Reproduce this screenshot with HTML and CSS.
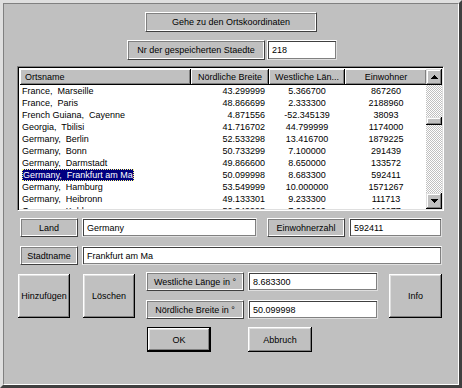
FILE: index.html
```html
<!DOCTYPE html>
<html lang="de">
<head>
    <meta charset="UTF-8">
    <title>Ortskoordinaten</title>
    <link rel="stylesheet" href="styles.css">
</head>
<body>
    <div class="window">
        <div class="frame">
            <div class="title-row">
                <div class="caption">Gehe zu den Ortskoordinaten</div>
            </div>

            <div class="count-row">
                <div class="caption count-label">Nr der gespeicherten Staedte</div>
                <input type="text" class="field count-field" value="218">
            </div>

            <div class="list">
                <div class="list-body">
                    <table class="cities">
                        <colgroup>
                            <col class="col-name">
                            <col class="col-lat">
                            <col class="col-lon">
                            <col class="col-pop">
                        </colgroup>
                        <thead>
                            <tr>
                                <th class="left">Ortsname</th>
                                <th>Nördliche Breite</th>
                                <th>Westliche Län...</th>
                                <th>Einwohner</th>
                            </tr>
                        </thead>
                        <tbody>
                            <tr><td>France,  Marseille</td><td class="num">43.299999</td><td>5.366700</td><td>867260</td></tr>
                            <tr><td>France,  Paris</td><td class="num">48.866699</td><td>2.333300</td><td>2188960</td></tr>
                            <tr><td>French Guiana,  Cayenne</td><td class="num">4.871556</td><td>-52.345139</td><td>38093</td></tr>
                            <tr><td>Georgia,  Tbilisi</td><td class="num">41.716702</td><td>44.799999</td><td>1174000</td></tr>
                            <tr><td>Germany,  Berlin</td><td class="num">52.533298</td><td>13.416700</td><td>1879225</td></tr>
                            <tr><td>Germany,  Bonn</td><td class="num">50.733299</td><td>7.100000</td><td>291439</td></tr>
                            <tr><td>Germany,  Darmstadt</td><td class="num">49.866600</td><td>8.650000</td><td>133572</td></tr>
                            <tr><td><span class="selected">Germany,  Frankfurt am Ma</span></td><td class="num">50.099998</td><td>8.683300</td><td>592411</td></tr>
                            <tr><td>Germany,  Hamburg</td><td class="num">53.549999</td><td>10.000000</td><td>1571267</td></tr>
                            <tr><td>Germany,  Heibronn</td><td class="num">49.133301</td><td>9.233300</td><td>111713</td></tr>
                            <tr><td>Germany,  Koblenz</td><td class="num">50.349998</td><td>7.600000</td><td>110977</td></tr>
                        </tbody>
                    </table>
                </div>
                <div class="scrollbar">
                    <div class="arrow">
                        <svg width="7" height="4" viewBox="0 0 7 4"><path d="M3 0h1v1h1v1h1v1h1v1H0V3h1V2h1V1h1z" fill="#000"/></svg>
                    </div>
                    <div class="track">
                        <div class="thumb"></div>
                    </div>
                    <div class="arrow">
                        <svg width="7" height="4" viewBox="0 0 7 4"><path d="M0 0h7v1H6v1H5v1H4v1H3V3H2V2H1V1H0z" fill="#000"/></svg>
                    </div>
                </div>
            </div>

            <div class="form-row land-row">
                <div class="caption small-label">Land</div>
                <input type="text" class="field land-field" value="Germany">
                <div class="caption pop-label">Einwohnerzahl</div>
                <input type="text" class="field pop-field" value="592411">
            </div>

            <div class="form-row city-row">
                <div class="caption small-label">Stadtname</div>
                <input type="text" class="field city-field" value="Frankfurt am Ma">
            </div>

            <div class="edit-row">
                <button class="button big-button">Hinzufügen</button>
                <button class="button big-button delete-button">Löschen</button>
                <div class="coords">
                    <div class="coord-line">
                        <div class="caption coord-label">Westliche Länge in °</div>
                        <input type="text" class="field coord-field" value="8.683300">
                    </div>
                    <div class="coord-line">
                        <div class="caption coord-label">Nördliche Breite in °</div>
                        <input type="text" class="field coord-field" value="50.099998">
                    </div>
                </div>
                <button class="button big-button info-button">Info</button>
            </div>

            <div class="action-row">
                <button class="button action-button default">OK</button>
                <button class="button action-button">Abbruch</button>
            </div>
        </div>
    </div>
</body>
</html>
```
FILE: styles.css
```css
body {
    margin: 0;
    background-color: #c0c0c0;
    font-family: "Liberation Sans", Arial, sans-serif;
    font-size: 9px;
    color: #000;
}

.window {
    width: 462px;
    height: 388px;
    box-sizing: border-box;
    border: 3px solid;
    border-color: #dfdfdf #404040 #404040 #dfdfdf;
}

.frame {
    height: 100%;
    box-sizing: border-box;
    border: 1px solid;
    border-color: #808080 #fff #fff #808080;
    padding-top: 8px;
}

/* static text with a frame */
.caption {
    box-sizing: border-box;
    height: 20px;
    display: flex;
    align-items: center;
    justify-content: center;
    background-color: #c0c0c0;
    border: 1px solid;
    border-color: #fff #404040 #404040 #fff;
    box-shadow: inset 1px 1px #808080, inset -1px -1px #fff;
    white-space: nowrap;
}

.field {
    box-sizing: border-box;
    height: 20px;
    margin: 0;
    padding: 0 4px;
    font: inherit;
    color: #000;
    background-color: #fff;
    border: 1px solid;
    border-color: #fff #dfdfdf #dfdfdf #fff;
    box-shadow: inset 1px 1px #404040, inset -1px -1px #808080;
    outline: none;
}

.button {
    box-sizing: border-box;
    margin: 0;
    padding: 0;
    font: inherit;
    color: #000;
    background-color: #c0c0c0;
    border: none;
    box-shadow: inset -1px -1px #000, inset 1px 1px #fff, inset -2px -2px #808080, inset 2px 2px #dfdfdf;
}

.title-row {
    display: flex;
    justify-content: center;
}

.title-row .caption {
    width: 172px;
}

.count-row {
    display: flex;
    justify-content: center;
    gap: 2px;
    margin-top: 8px;
    padding-left: 2px;
}

.count-label {
    width: 138px;
}

.count-field {
    width: 70px;
}

/* list view */
.list {
    display: flex;
    box-sizing: border-box;
    width: 427px;
    height: 145px;
    margin: 6px 0 0 13px;
    background-color: #fff;
    border: 1px solid;
    border-color: #808080 #fff #fff #808080;
    box-shadow: inset 1px 1px #000, inset -1px -1px #dfdfdf;
    padding: 2px 1px 1px 2px;
}

.list-body {
    flex: 1;
    overflow: hidden;
}

.cities {
    width: 407px;
    border-collapse: collapse;
    table-layout: fixed;
}

.col-name { width: 171px; }
.col-lat { width: 78px; }
.col-lon { width: 76px; }
.col-pop { width: 82px; }

.cities th {
    height: 16px;
    padding: 0;
    font-weight: normal;
    background-color: #c0c0c0;
    box-shadow: inset -1px -1px #000, inset 1px 1px #fff, inset -2px -2px #808080;
    white-space: nowrap;
    overflow: hidden;
}

.cities th.left {
    text-align: left;
    padding-left: 5px;
}

.cities td {
    height: 12px;
    padding: 0;
    line-height: 12px;
    text-align: center;
    white-space: pre;
    overflow: hidden;
}

.cities td:first-child {
    text-align: left;
    padding-left: 2px;
}

.cities td.num {
    text-align: right;
    padding-right: 4px;
}

.selected {
    display: inline-block;
    padding: 0 1px;
    background-color: #000080;
    color: #fff;
    outline: 1px dotted #ffff80;
    outline-offset: -1px;
}

.scrollbar {
    width: 16px;
    display: flex;
    flex-direction: column;
}

.arrow {
    height: 16px;
    display: flex;
    align-items: center;
    justify-content: center;
    background-color: #c0c0c0;
    box-shadow: inset -1px -1px #000, inset 1px 1px #dfdfdf, inset -2px -2px #808080, inset 2px 2px #fff;
}

.track {
    flex: 1;
    background: repeating-conic-gradient(#c0c0c0 0 25%, #fff 0 50%) 0 0 / 2px 2px;
}

.thumb {
    height: 8px;
    margin-top: 32px;
    background-color: #c0c0c0;
    box-shadow: inset -1px -1px #000, inset 1px 1px #dfdfdf, inset -2px -2px #808080, inset 2px 2px #fff;
}

/* form rows */
.form-row {
    display: flex;
    padding-left: 16px;
}

.form-row .caption,
.form-row .field {
    height: 19px;
}

.land-row {
    margin-top: 7px;
}

.city-row {
    margin-top: 9px;
}

.small-label {
    width: 58px;
    margin-right: 4px;
}

.land-field {
    width: 175px;
    margin-right: 10px;
}

.pop-label {
    width: 78px;
    margin-right: 4px;
}

.pop-field {
    width: 93px;
}

.city-field {
    width: 360px;
}

.edit-row {
    display: flex;
    align-items: flex-start;
    margin-top: 7px;
    padding-left: 14px;
}

.big-button {
    width: 52px;
    height: 44px;
    margin-top: 2px;
}

.delete-button {
    margin-left: 13px;
}

.coords {
    display: flex;
    flex-direction: column;
    gap: 9px;
    margin-left: 11px;
}

.coord-line {
    display: flex;
    gap: 4px;
}

.coord-label {
    width: 98px;
    height: 19px;
}

.coord-field {
    width: 130px;
    height: 19px;
}

.info-button {
    width: 53px;
    margin-left: 11px;
}

.action-row {
    display: flex;
    gap: 37px;
    margin-top: 8px;
    padding-left: 143px;
}

.action-button {
    width: 64px;
    height: 25px;
}

.action-button.default {
    border: 1px solid #000;
}
```
